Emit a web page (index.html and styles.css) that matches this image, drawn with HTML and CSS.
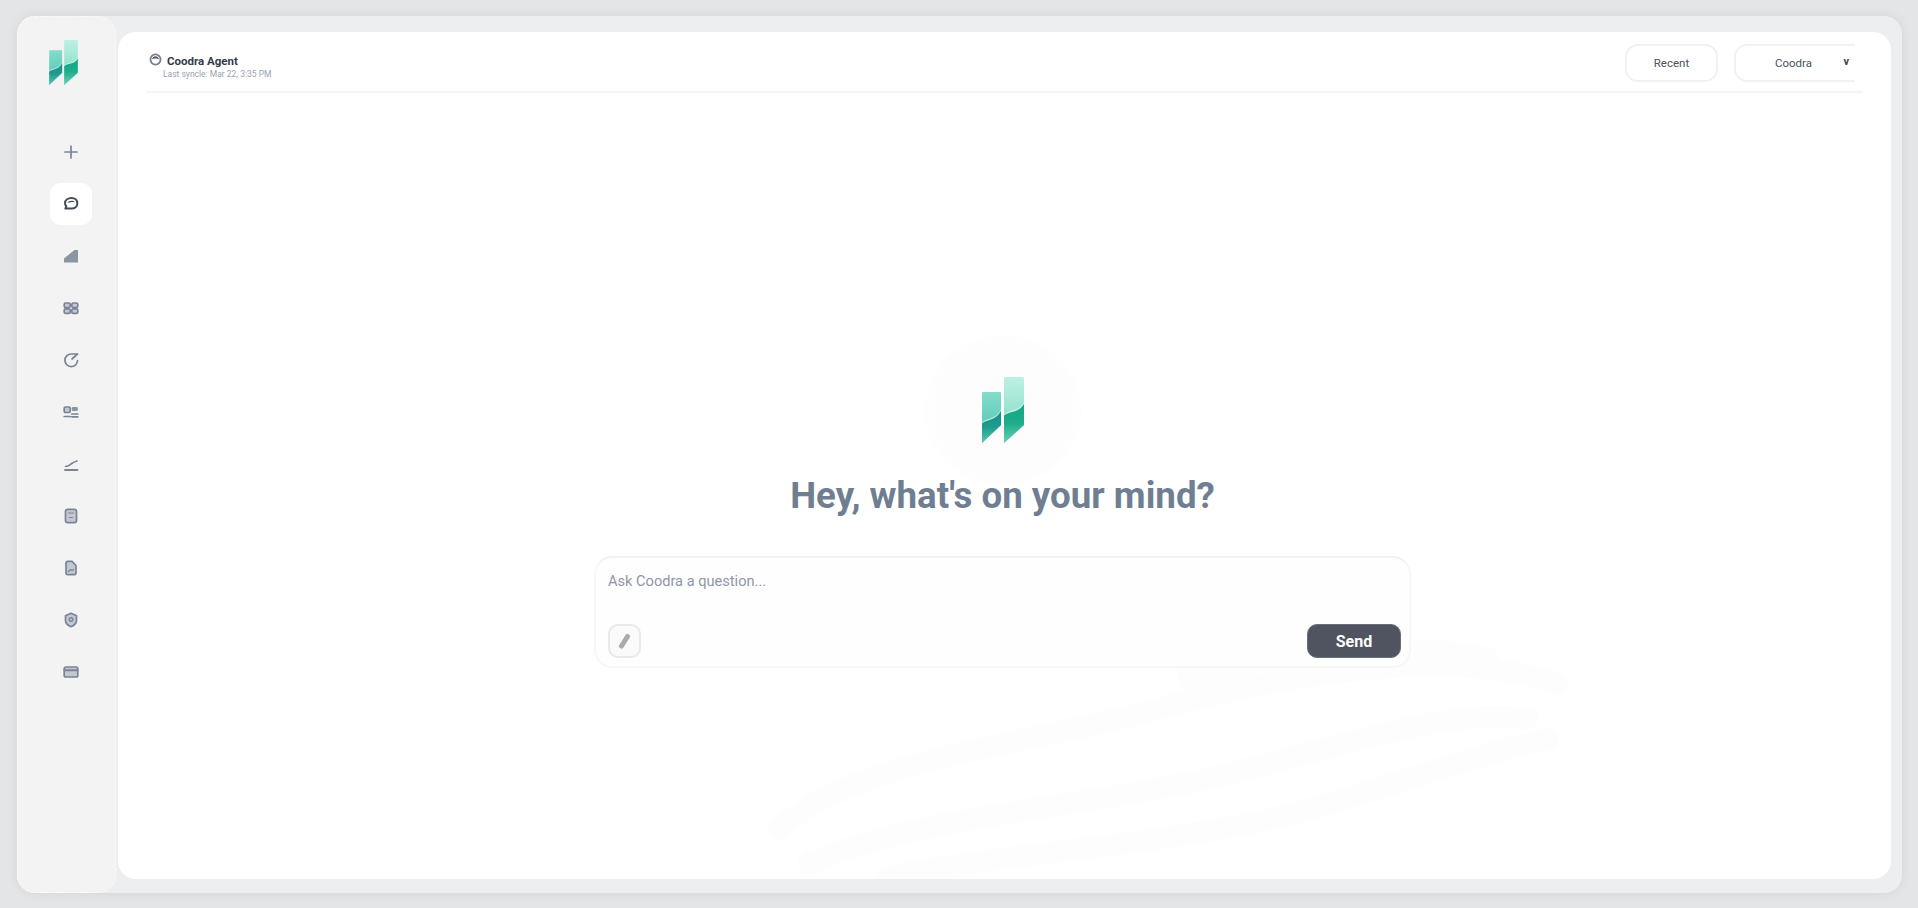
FILE: index.html
```html
<!DOCTYPE html>
<html lang="en">
<head>
  <meta charset="UTF-8">
  <meta name="viewport" content="width=device-width, initial-scale=1">
  <title>Coodra Agent</title>
  <link rel="stylesheet" href="styles.css">
</head>
<body>
  <svg class="defs" width="0" height="0" aria-hidden="true">
    <defs>
      <linearGradient id="barLeft" x1="0" y1="0" x2="0" y2="1">
        <stop offset="0" stop-color="#84dccb"/>
        <stop offset="1" stop-color="#4cc2ae"/>
      </linearGradient>
      <linearGradient id="barRight" x1="0" y1="0" x2="0" y2="1">
        <stop offset="0" stop-color="#bdf0e2"/>
        <stop offset="1" stop-color="#74d8c0"/>
      </linearGradient>
      <linearGradient id="lowRight" x1="0" y1="0" x2="0" y2="1">
        <stop offset="0" stop-color="#16a584"/>
        <stop offset="0.500" stop-color="#1fae8d"/>
        <stop offset="1" stop-color="#66d3b6"/>
      </linearGradient>
      <linearGradient id="lowLeft" x1="0" y1="0" x2="0" y2="1">
        <stop offset="0" stop-color="#1b9189"/>
        <stop offset="0.500" stop-color="#1f9b8e"/>
        <stop offset="1" stop-color="#56c9b2"/>
      </linearGradient>
      <symbol id="logo" viewBox="0 0 42 66">
        <path d="M1 15h17a1 1 0 0 1 1 1v32L0 66V16a1 1 0 0 1 1-1z" fill="url(#barLeft)"/>
        <path d="M0 45c2-2 5-2.500 9-4 5-1.500 8-5 10-9v16L0 66z" fill="#aee8da"/>
        <path d="M0 46.500c2-2 5-2.500 9-4 5-1.500 8-5 10-8.500V48L0 66z" fill="url(#lowLeft)"/>
        <path d="M23 0h17a2 2 0 0 1 2 2v46L22 66V2a2 2 0 0 1 1-2z" fill="url(#barRight)"/>
        <path d="M22 37c2-2 6-3 10-4 5-1.500 8-4 10-8v23L22 66z" fill="#c5f0e4"/>
        <path d="M22 38.500c2-2 6-3 10-4 5-1.500 8-4 10-7.500V48L22 66z" fill="url(#lowRight)"/>
      </symbol>
    </defs>
  </svg>

  <div class="frame">
    <aside class="sidebar">
      <svg class="side-logo"><use href="#logo"/></svg>
      <nav class="side-nav">
        <a class="nav-item">
          <svg viewBox="0 0 16 16"><path d="M8 2v12M2 8h12" stroke-width="1.700"/></svg>
        </a>
        <a class="nav-item active">
          <svg viewBox="0 0 16 16"><path d="M8.500 2c3.200 0 5.800 1.900 5.800 5.300s-2.600 5.300-5.800 5.300H2.300l1-2.300C2.300 9.300 2 8.300 2 7.300 2 3.900 5.200 2 8.500 2z" stroke-width="2"/><path class="cap" d="M4.500 7c1-2.300 5.500-3 7.500-.8-2.500-.6-5-.2-7.500.8z"/></svg>
        </a>
        <a class="nav-item">
          <svg viewBox="0 0 16 16"><path class="solid" d="M1 14.500V10.500L11.500 2h3.500v12.500z"/></svg>
        </a>
        <a class="nav-item">
          <svg viewBox="0 0 16 16"><rect class="tint" x="1.200" y="3" width="6" height="4.500" rx="1.400"/><rect class="tint" x="8.800" y="3" width="6" height="4.500" rx="1.400"/><rect class="tint" x="1.200" y="8.800" width="6" height="4.500" rx="1.400"/><rect class="tint" x="8.800" y="8.800" width="6" height="4.500" rx="1.400"/></svg>
        </a>
        <a class="nav-item">
          <svg viewBox="0 0 16 16"><path d="M14.500 8.500A6.300 6.300 0 1 1 8 2h6.500M9 7l5.500-5" stroke-width="1.700"/></svg>
        </a>
        <a class="nav-item">
          <svg viewBox="0 0 16 16"><rect class="tint" x="1.200" y="3" width="6" height="5.500" rx="1.200"/><rect class="solid" x="8.800" y="3" width="6" height="4" rx="1.200"/><path d="M1.200 12.500h6M8.800 10h6M8.800 12.800h6" stroke-width="1.700"/></svg>
        </a>
        <a class="nav-item">
          <svg viewBox="0 0 16 16"><path d="M2 14h12.500" stroke-width="1.800"/><path d="M2.500 10.500c3-.2 4-1 5.500-2.500 1.500-1.200 3-2.300 6-3" stroke-width="1.700"/></svg>
        </a>
        <a class="nav-item">
          <svg viewBox="0 0 16 16"><rect class="tint" x="2.500" y="1.300" width="11" height="13.400" rx="2.200"/><path d="M5.500 5h5M6.500 9.500h3" stroke-width="1.200"/></svg>
        </a>
        <a class="nav-item">
          <svg viewBox="0 0 16 16"><path class="tint" d="M4.500 1.300h4.500l4 4.200v7.700a1.500 1.500 0 0 1-1.500 1.500h-7A1.500 1.500 0 0 1 3 13.200V2.800a1.500 1.500 0 0 1 1.500-1.500z"/><path d="M5.500 11.500l2-2 1.500 1 1.500-1" stroke-width="1.200"/></svg>
        </a>
        <a class="nav-item">
          <svg viewBox="0 0 16 16"><path class="tint" d="M8 1.300l5.500 2.500v4.700c0 3-2.500 5-5.500 6.200-3-1.200-5.500-3.200-5.500-6.200V3.800z"/><circle cx="8" cy="7.500" r="1.800" stroke-width="1.400"/></svg>
        </a>
        <a class="nav-item">
          <svg viewBox="0 0 16 16"><rect class="tint" x="1.200" y="3" width="13.600" height="10" rx="1.800"/><path d="M1.500 6.300h13" stroke-width="2"/></svg>
        </a>
      </nav>
    </aside>

    <main class="main">
      <svg class="smudge" viewBox="0 0 800 240" aria-hidden="true">
        <path d="M10 190C90 120 240 110 390 70S690 10 790 45"/>
        <path d="M40 225C170 170 330 170 480 130S700 70 760 80"/>
        <path d="M120 238C260 210 430 205 560 165S730 110 780 100"/>
        <path d="M420 40C520 10 640 0 720 20"/>
      </svg>

      <header class="topbar">
        <div class="agent">
          <div class="agent-name">
            <svg class="agent-icon" viewBox="0 0 16 16"><circle cx="8" cy="8" r="6.200" stroke-width="2.200"/><path class="solid" d="M3.500 8c.5-2.500 2.500-4 4.500-4s4 1.500 4.500 4c-2-1.500-7-1.500-9 0z"/></svg>
            Coodra Agent
          </div>
          <div class="agent-sync">Last syncle: Mar 22, 3:35 PM</div>
        </div>
        <div class="top-actions">
          <button class="btn-recent" type="button">Recent</button>
          <button class="btn-select" type="button">Coodra<span class="chevron">v</span></button>
        </div>
      </header>

      <section class="hero">
        <div class="hero-logo">
          <svg class="hero-mark"><use href="#logo"/></svg>
        </div>
        <h1>Hey, what's on your mind?</h1>
        <form class="ask-box">
          <textarea class="ask-input" placeholder="Ask Coodra a question..."></textarea>
          <div class="ask-actions">
            <button class="btn-attach" type="button" aria-label="Attach">
              <svg viewBox="0 0 16 16"><path d="M4.500 13L10.500 3.500" stroke="#a8acb1" stroke-width="5" stroke-linecap="round"/></svg>
            </button>
            <button class="btn-send" type="button">Send</button>
          </div>
        </form>
      </section>
    </main>
  </div>
</body>
</html>
```

FILE: styles.css
```css
* {
  box-sizing: border-box;
  margin: 0;
  padding: 0;
}

html, body {
  height: 100%;
  overflow: hidden;
}

body {
  font-family: Roboto, 'Liberation Sans', sans-serif;
  background: #e4e5e7;
  padding: 16px 16px 15px 17px;
}

.defs {
  position: absolute;
}

.frame {
  display: flex;
  height: 100%;
  background: #eceef0;
  border-radius: 18px;
  box-shadow: 0 0 12px rgba(0, 0, 0, 0.07);
}

/* sidebar */
.sidebar {
  width: 99px;
  flex-shrink: 0;
  display: flex;
  flex-direction: column;
  align-items: center;
  background: #f3f3f4;
  border: 1px dashed #fafafa;
  border-radius: 18px;
  padding-top: 23px;
}

.side-logo {
  width: 29px;
  height: 45px;
  margin: 0 6px 46px 0;
}

.side-nav {
  display: flex;
  flex-direction: column;
  align-items: center;
  gap: 10px;
  margin-left: 9px;
}

.nav-item {
  width: 42px;
  height: 42px;
  display: flex;
  align-items: center;
  justify-content: center;
  border-radius: 11px;
}

.nav-item svg {
  width: 16px;
  height: 16px;
  fill: none;
  stroke: #7a8496;
  stroke-width: 1.700;
  stroke-linecap: round;
  stroke-linejoin: round;
}

.nav-item svg .solid {
  fill: #8a94a3;
  stroke: none;
}

.nav-item svg .tint {
  fill: #c3c8d0;
}

.nav-item.active {
  background: #fff;
}

.nav-item.active svg {
  stroke: #454b57;
}

.nav-item.active svg .cap {
  fill: #454b57;
  stroke: none;
}

/* main card */
.main {
  position: relative;
  flex: 1;
  margin: 16px 11px 14px 2px;
  padding: 0 28px;
  background: #fff;
  border-radius: 18px;
  overflow: hidden;
}

.smudge {
  position: absolute;
  left: 650px;
  bottom: 0;
  width: 800px;
  height: 240px;
  fill: none;
  stroke: #fdfdfd;
  stroke-width: 22;
  stroke-linecap: round;
}

.topbar {
  position: relative;
  display: flex;
  justify-content: space-between;
  height: 61px;
  padding-right: 8px;
  border-bottom: 2px solid #f3f4f5;
}

.agent {
  padding: 20px 0 0 3px;
}

.agent-name {
  display: flex;
  align-items: center;
  gap: 5px;
  height: 18px;
  font-size: 11.500px;
  font-weight: 700;
  color: #343c4a;
}

.agent-icon {
  width: 13px;
  height: 13px;
  margin-top: -3px;
  fill: none;
  stroke: #777e8c;
}

.agent-icon .solid {
  fill: #555c6a;
  stroke: none;
}

.agent-sync {
  padding-left: 14px;
  margin-top: -1px;
  font-size: 8.500px;
  line-height: 11px;
  color: #9aa2b2;
}

.top-actions {
  display: flex;
  gap: 16px;
  padding-top: 12px;
}

.btn-recent,
.btn-select {
  height: 38px;
  font-family: inherit;
  font-size: 11.500px;
  color: #4a5360;
  background: #fff;
  border: 2px solid #f0f1f1;
  border-radius: 13px;
}

.btn-recent {
  width: 93px;
}

.btn-select {
  position: relative;
  width: 121px;
  padding-right: 4px;
  border-right: none;
  border-radius: 13px 0 0 13px;
}

.chevron {
  position: absolute;
  right: 6px;
  top: 9px;
  font-size: 11px;
  font-weight: 700;
  color: #3a4250;
}

/* hero */
.hero {
  position: relative;
  display: flex;
  flex-direction: column;
  align-items: center;
  margin-left: -4px;
  padding-top: 284px;
}

.hero-logo {
  position: relative;
  width: 42px;
  height: 66px;
}

.hero-logo::before {
  content: '';
  position: absolute;
  left: -58px;
  top: -42px;
  width: 158px;
  height: 150px;
  border-radius: 50%;
  background: radial-gradient(circle, #fcfcfd 0%, #fdfdfe 55%, #fff 100%);
}

.hero-mark {
  position: relative;
  display: block;
  width: 42px;
  height: 66px;
}

h1 {
  position: relative;
  margin-top: 30px;
  font-size: 36.700px;
  line-height: 46px;
  font-weight: 700;
  color: #6f7f91;
}

.ask-box {
  position: relative;
  display: flex;
  flex-direction: column;
  justify-content: space-between;
  width: 817px;
  height: 112px;
  margin-top: 37px;
  padding: 12px 8px 8px 12px;
  background: #fefefe;
  border: 2px solid #f7f7f8;
  border-top-color: #f2f2f3;
  border-radius: 18px;
}

.ask-input {
  height: 24px;
  border: none;
  outline: none;
  resize: none;
  background: transparent;
  font-family: inherit;
  font-size: 14.600px;
  line-height: 22px;
}

.ask-input::placeholder {
  color: #8f96a8;
}

.ask-actions {
  display: flex;
  justify-content: space-between;
}

.btn-attach {
  width: 33px;
  height: 34px;
  display: flex;
  align-items: center;
  justify-content: center;
  background: #fafafa;
  border: 2px solid #e8e9ea;
  border-radius: 10px;
}

.btn-attach svg {
  width: 16px;
  height: 16px;
  fill: none;
}

.btn-send {
  width: 94px;
  height: 34px;
  font-family: inherit;
  font-size: 16px;
  font-weight: 700;
  color: #fff;
  background: #4f5460;
  border: 1px solid #6b6f7a;
  border-radius: 10px;
}
```
